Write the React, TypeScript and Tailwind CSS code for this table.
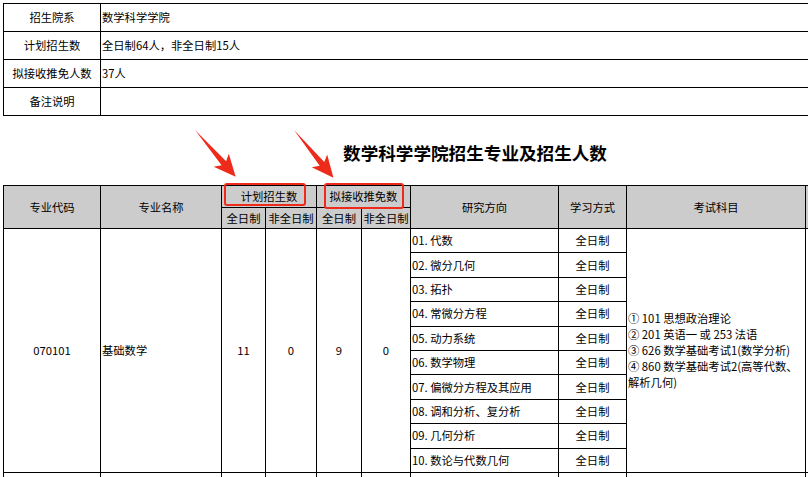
import React from "react";

const font = { fontFamily: '"Noto Sans CJK SC", "Noto Sans", sans-serif' };

const infoRows = [
  ["招生院系", "数学科学学院"],
  ["计划招生数", "全日制64人，非全日制15人"],
  ["拟接收推免人数", "37人"],
  ["备注说明", ""],
];

const directions = [
  "01. 代数",
  "02. 微分几何",
  "03. 拓扑",
  "04. 常微分方程",
  "05. 动力系统",
  "06. 数学物理",
  "07. 偏微分方程及其应用",
  "08. 调和分析、复分析",
  "09. 几何分析",
  "10. 数论与代数几何",
];

const exams = [
  "① 101 思想政治理论",
  "② 201 英语一 或 253 法语",
  "③ 626 数学基础考试1(数学分析)",
  "④ 860 数学基础考试2(高等代数、解析几何)",
];

const cell = "border border-black px-[1px] align-middle";
const head = "border border-black bg-[#cccccc] text-center align-middle font-normal";

const Arrow = ({ x, y, angle }: { x: number; y: number; angle: number }) => (
  <g transform={`translate(${x} ${y}) rotate(${angle})`}>
    <polygon points="0,0 44,-3 40,-10 62,0 40,10 44,3" fill="#ee2a1b" />
  </g>
);

export default function App() {
  return (
    <div className="relative w-[808px] h-[477px] overflow-hidden bg-white text-[11.3px] text-black" style={font}>
      <div className="pl-[3px] pt-[3px]">
        {/* 基本信息 */}
        <table className="table-fixed border-collapse w-[960px] border border-[#333]">
          <colgroup>
            <col className="w-[97px]" />
            <col />
          </colgroup>
          <tbody>
            {infoRows.map(([k, v]) => (
              <tr key={k} className="h-[28px]">
                <td className={`${cell} text-center`}>{k}</td>
                <td className={cell}>{v}</td>
              </tr>
            ))}
          </tbody>
        </table>

        <div className="h-[69px] w-[944px] pt-[26px] text-center text-[17.6px] font-bold leading-[22px]">
          数学科学学院招生专业及招生人数
        </div>

        {/* 招生专业表 */}
        <table className="table-fixed border-collapse w-[1000px] border border-[#333]">
          <colgroup>
            <col className="w-[97px]" />
            <col className="w-[121px]" />
            <col className="w-[44px]" />
            <col className="w-[51px]" />
            <col className="w-[45px]" />
            <col className="w-[49px]" />
            <col className="w-[148px]" />
            <col className="w-[68px]" />
            <col className="w-[179px]" />
            <col />
          </colgroup>
          <thead>
            <tr className="h-[22px]">
              <th rowSpan={2} className={head}>专业代码</th>
              <th rowSpan={2} className={head}>专业名称</th>
              <th colSpan={2} className={head}>计划招生数</th>
              <th colSpan={2} className={head}>拟接收推免数</th>
              <th rowSpan={2} className={head}>研究方向</th>
              <th rowSpan={2} className={head}>学习方式</th>
              <th rowSpan={2} className={head}>考试科目</th>
              <th rowSpan={2} className={head}></th>
            </tr>
            <tr className="h-[21px]">
              <th className={head}>全日制</th>
              <th className={head}>非全日制</th>
              <th className={head}>全日制</th>
              <th className={head}>非全日制</th>
            </tr>
          </thead>
          <tbody>
            {directions.map((d, i) => (
              <tr key={d} className="h-[24.4px]">
                {i === 0 && (
                  <>
                    <td rowSpan={10} className={`${cell} text-center`}>070101</td>
                    <td rowSpan={10} className={cell}>基础数学</td>
                    <td rowSpan={10} className={`${cell} text-center`}>11</td>
                    <td rowSpan={10} className={`${cell} text-center`}>0</td>
                    <td rowSpan={10} className={`${cell} text-center`}>9</td>
                    <td rowSpan={10} className={`${cell} text-center`}>0</td>
                  </>
                )}
                <td className={cell}>{d}</td>
                <td className={`${cell} text-center`}>全日制</td>
                {i === 0 && (
                  <>
                    <td rowSpan={10} className={`${cell} leading-[16px]`}>
                      {exams.map((e) => (
                        <div key={e}>{e}</div>
                      ))}
                    </td>
                    <td rowSpan={10} className={cell}></td>
                  </>
                )}
              </tr>
            ))}
            <tr className="h-[24px]">
              {Array.from({ length: 10 }).map((_, i) => (
                <td key={i} className={cell}></td>
              ))}
            </tr>
          </tbody>
        </table>
      </div>

      {/* 标注 */}
      <div className="absolute left-[224px] top-[183px] w-[82px] h-[23px] rounded-[3px] border-2 border-[#ee2a1b]" />
      <div className="absolute left-[324px] top-[183px] w-[80px] h-[26px] rounded-[3px] border-2 border-[#ee2a1b]" />
      <svg className="absolute left-0 top-0" width="808" height="477">
        <Arrow x={195} y={130} angle={49} />
        <Arrow x={294} y={130} angle={50.5} />
      </svg>
    </div>
  );
}
